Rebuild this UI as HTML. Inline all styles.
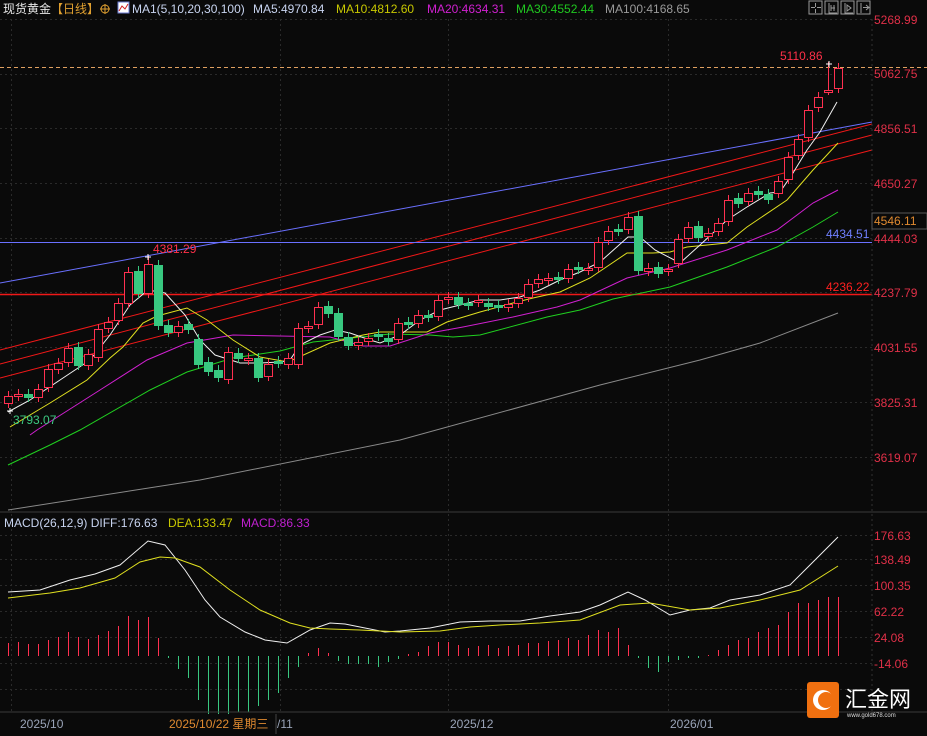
<!DOCTYPE html>
<html><head><meta charset="utf-8">
<style>
html,body{margin:0;padding:0;background:#0a0a0a;width:927px;height:736px;overflow:hidden}
svg{display:block}
text{font-family:"Liberation Sans","Noto Sans CJK SC",sans-serif}
</style></head><body>
<svg id="s" width="927" height="736" viewBox="0 0 927 736" xmlns="http://www.w3.org/2000/svg">
<rect width="927" height="736" fill="#0a0a0a"/>
<g id="grid" stroke="#2a2a2a" stroke-dasharray="2,3" stroke-width="1"></g>
<!-- header -->
<text x="3" y="13" font-size="12" fill="#e8e8e8">现货黄金<tspan fill="#e0a030">【日线】</tspan></text>
<circle cx="105" cy="9" r="4" fill="none" stroke="#e0a030" stroke-width="1"/>
<line x1="100" y1="9" x2="110" y2="9" stroke="#e0a030"/><line x1="105" y1="4" x2="105" y2="14" stroke="#e0a030"/>
<rect x="118" y="2" width="11" height="11" fill="#fff" stroke="#6a7ad0"/>
<polyline points="119,11 122,6 125,9 128,4" fill="none" stroke="#d02020" stroke-width="1"/>
<text x="132" y="13" font-size="12" fill="#c8d4f0">MA1(5,10,20,30,100)</text>
<text x="253" y="13" font-size="12" fill="#c8d4f0">MA5:4970.84</text>
<text x="336" y="13" font-size="12" fill="#c8c800">MA10:4812.60</text>
<text x="427" y="13" font-size="12" fill="#d020d0">MA20:4634.31</text>
<text x="516" y="13" font-size="12" fill="#20c820">MA30:4552.44</text>
<text x="605" y="13" font-size="12" fill="#9a9a9a">MA100:4168.65</text>
<!-- top right buttons -->
<g fill="none" stroke="#9a9a9a" stroke-width="1">
<rect x="809" y="1" width="13" height="13"/><rect x="825" y="1" width="13" height="13"/><rect x="841" y="1" width="13" height="13"/><rect x="857" y="1" width="13" height="13"/>
<path d="M815.5 3v4M815.5 9v4M811 7.5h4M817 7.5h4"/>
<path d="M829 3v10h8M831 5v6M834 5v6M831 8h4"/>
<path d="M845 3v10h8M847 5l4 3-4 3z"/>
<path d="M861 3v10M863 7.5h6M866 5l3 2.5-3 2.5"/>
</g>
<g id="chart"></g>
<!-- axis labels -->
<line x1="872" y1="19" x2="872" y2="712" stroke="#333" stroke-dasharray="2,3"/>
<g font-size="12" fill="#e03048">
<text x="874" y="24">5268.99</text><text x="874" y="78">5062.75</text><text x="874" y="133">4856.51</text>
<text x="874" y="188">4650.27</text><text x="874" y="243">4444.03</text><text x="874" y="297">4237.79</text>
<text x="874" y="352">4031.55</text><text x="874" y="407">3825.31</text><text x="874" y="462">3619.07</text>
<text x="874" y="540">176.63</text><text x="874" y="564">138.49</text><text x="874" y="590">100.35</text>
<text x="874" y="616">62.22</text><text x="874" y="642">24.08</text><text x="874" y="668">-14.06</text>
</g>
<rect x="872" y="213" width="55" height="16" fill="#0a0a0a" stroke="#555"/>
<text x="874" y="225" font-size="12" fill="#e08a30">4546.11</text>
<text x="826" y="238" font-size="12" fill="#7080ff">4434.51</text>
<text x="826" y="291" font-size="12" fill="#ff2020">4236.22</text>
<text x="780" y="60" font-size="12" fill="#ff3048">5110.86</text>
<text x="153" y="253" font-size="12" fill="#ff3048">4381.29</text>
<text x="13" y="424" font-size="12" fill="#3cc880">3793.07</text>
<!-- macd header -->
<line x1="0" y1="512" x2="927" y2="512" stroke="#3a3a3a"/>
<text x="4" y="527" font-size="12" fill="#c8d4f0">MACD(26,12,9) DIFF:176.63</text>
<text x="168" y="527" font-size="12" fill="#c8c800">DEA:133.47</text>
<text x="241" y="527" font-size="12" fill="#c020d0">MACD:86.33</text>
<!-- bottom axis -->
<line x1="0" y1="712" x2="927" y2="712" stroke="#3a3a3a"/>
<g font-size="12" fill="#9aa4b8"><text x="20" y="728">2025/10</text><text x="277" y="728">/11</text><text x="450" y="728">2025/12</text><text x="670" y="728">2026/01</text></g>
<rect x="166" y="714" width="110" height="20" fill="#0a0a0a"/>
<text x="169" y="728" font-size="12" fill="#e08a30">2025/10/22 星期三</text>
<line x1="276" y1="714" x2="276" y2="734" stroke="#444"/>
<!-- logo -->
<rect x="807" y="682" width="32" height="36" rx="3" fill="#f07010"/>
<circle cx="823" cy="700" r="10" fill="#fff"/><circle cx="826" cy="700" r="8" fill="#f07010"/>
<text x="845" y="707" font-size="22" fill="#fff" font-family="'Noto Sans CJK SC',sans-serif">汇金网</text>
<text x="847" y="717" font-size="6" fill="#ddd">www.gold678.com</text>
</svg>
<script>
var NS="http://www.w3.org/2000/svg",ch=document.getElementById('chart'),gr=document.getElementById('grid');
function el(p,t,a){var e=document.createElementNS(NS,t);for(var k in a)e.setAttribute(k,a[k]);p.appendChild(e);return e;}
[19,74,128,183,238,292,347,402,457,535,559,585,611,637,663,689].forEach(function(y){el(gr,'line',{x1:0,y1:y+.5,x2:872,y2:y+.5});});
[11,280,448,668].forEach(function(x){el(gr,'line',{x1:x+.5,y1:19,x2:x+.5,y2:712});});
el(ch,'line',{x1:0,y1:283,x2:872,y2:122,stroke:'#6a70ff','stroke-width':1});
el(ch,'line',{x1:0,y1:350,x2:872,y2:124,stroke:'#f01818'});
el(ch,'line',{x1:0,y1:364,x2:872,y2:135,stroke:'#f01818'});
el(ch,'line',{x1:0,y1:378,x2:872,y2:150,stroke:'#f01818'});
el(ch,'line',{x1:0,y1:242.5,x2:872,y2:242.5,stroke:'#6a70ff'});
el(ch,'line',{x1:0,y1:294.5,x2:872,y2:294.5,stroke:'#f01818','stroke-width':1.5});
el(ch,'line',{x1:0,y1:67.5,x2:927,y2:67.5,stroke:'#e0a060','stroke-dasharray':'4,3'});
function pl(pts,c){el(ch,'polyline',{points:pts,fill:'none',stroke:c,'stroke-width':1});}
pl("8,510 200,480 400,440 600,385 700,360 760,343 838,313","#8a8a8a");
pl("8,465 50,445 80,430 150,390 187,372 233,358 280,351 313,342 390,334 430,335 453,337 480,335 547,317 580,310 613,299 670,287 727,267 777,247 813,227 838,212","#20d020");
pl("30,435 37,430 100,390 147,360 187,343 233,335 280,336 330,337 363,346 390,346 430,333 463,327 513,317 557,307 580,300 627,278 670,268 727,250 777,230 813,203 838,190","#d020d0");
pl("10,427 50,403 87,380 110,358 123,347 143,323 157,316 187,308 207,320 233,340 260,357 288,362 330,343 363,335 380,332 427,332 447,322 480,312 513,303 533,298 560,292 590,278 627,253 653,253 670,252 687,247 727,243 747,227 787,200 813,170 838,143","#e0e020");
pl("8,412 30,400 60,380 90,360 110,335 130,305 148,290 165,293 185,315 200,340 215,355 240,363 260,363 280,362 290,360 300,345 320,335 335,330 350,333 370,340 380,343 400,335 420,320 440,310 460,305 480,300 500,300 520,297 540,290 560,280 580,272 600,262 628,237 640,237 655,250 680,263 700,245 727,220 747,207 770,193 780,192 793,173 807,150 820,132 837,102","#f0f0f0");
var C=[[396,403,'r'],[394,396,'r'],[394,397,'g'],[389,397,'r'],[369,387,'r'],[363,369,'r'],[348,362,'r'],[347,365,'g'],[354,365,'r'],[329,357,'r'],[322,328,'r'],[303,320,'r'],[272,303,'r'],[271,293,'g'],[264,293,'r'],[265,325,'g'],[325,332,'g'],[326,332,'r'],[324,329,'g'],[339,364,'g'],[362,371,'g'],[370,377,'g'],[352,379,'r'],[353,358,'g'],[358,360,'r'],[358,377,'g'],[364,376,'r'],[361,363,'g'],[358,364,'r'],[328,364,'r'],[326,328,'r'],[307,324,'r'],[306,313,'g'],[313,336,'g'],[337,345,'g'],[342,345,'r'],[338,341,'r'],[334,336,'g'],[338,341,'g'],[323,339,'r'],[322,324,'g'],[315,323,'r'],[315,317,'g'],[300,316,'r'],[297,299,'r'],[297,304,'g'],[303,305,'g'],[300,302,'r'],[303,306,'g'],[305,307,'g'],[304,307,'r'],[298,303,'r'],[284,297,'r'],[279,283,'r'],[278,280,'r'],[277,279,'g'],[269,278,'r'],[267,269,'g'],[268,270,'r'],[242,267,'r'],[231,240,'r'],[229,231,'g'],[217,229,'r'],[216,270,'g'],[268,271,'r'],[267,273,'g'],[269,271,'r'],[239,263,'r'],[227,238,'r'],[226,237,'g'],[233,236,'r'],[223,231,'r'],[200,221,'r'],[198,203,'g'],[193,201,'r'],[191,194,'g'],[194,199,'g'],[181,193,'r'],[157,179,'r'],[139,155,'r'],[110,137,'r'],[97,107,'r'],[90,92,'r'],[68,88,'r']];
C.forEach(function(c,i){var x=8+10*i,col=c[2]=='r'?'#ff3050':'#38c880';var hi=c[0]-5,lo=c[1]+5;if(i==14)hi=256;if(i==82){hi=62;lo=95;}
el(ch,'line',{x1:x+.5,y1:hi,x2:x+.5,y2:lo,stroke:col});
var h=Math.max(1,c[1]-c[0]);
if(c[2]=='r')el(ch,'rect',{x:x-3.5,y:c[0]+.5,width:8,height:h,fill:'#0a0a0a',stroke:col});
else el(ch,'rect',{x:x-4,y:c[0],width:9,height:h+1,fill:col});});
var H=[643,642,644,644,640,637,632,637,639,635,631,626,616,620,617,638,658,669,678,700,715,715,715,712,712,706,700,693,678,667,653,648,653,661,664,664,664,667,662,659,654,652,646,642,642,645,648,646,645,648,646,645,643,643,641,640,638,640,635,630,632,628,645,658,668,672,662,660,658,658,655,650,645,640,638,632,628,625,612,603,603,600,597,597];
H.forEach(function(y,i){var x=8+10*i+.5;el(ch,'line',{x1:x,y1:656,x2:x,y2:y,stroke:y<656?'#ff3050':'#38c880'});});
pl("8,592 40,590 70,580 95,574 120,565 148,541 165,545 185,570 205,600 220,617 245,632 265,640 287,643 310,630 330,623 345,624 360,627 385,632 400,631 430,628 460,622 490,621 520,621 550,616 580,612 600,605 628,592 645,600 670,615 690,610 710,608 730,600 760,595 790,585 810,565 838,537","#f0f0f0");
pl("8,598 50,593 80,588 115,578 140,562 160,557 175,558 200,567 230,590 260,610 290,623 310,628 330,629 360,630 400,632 440,631 470,627 500,625 540,623 580,620 620,605 650,603 690,610 720,608 760,600 800,590 838,566","#e0e020");
el(ch,'path',{d:'M7 411h6M10 408v6M145 257h6M148 254v6M826 64h6M829 61v6',stroke:'#fff'});
</script>
</body></html>
